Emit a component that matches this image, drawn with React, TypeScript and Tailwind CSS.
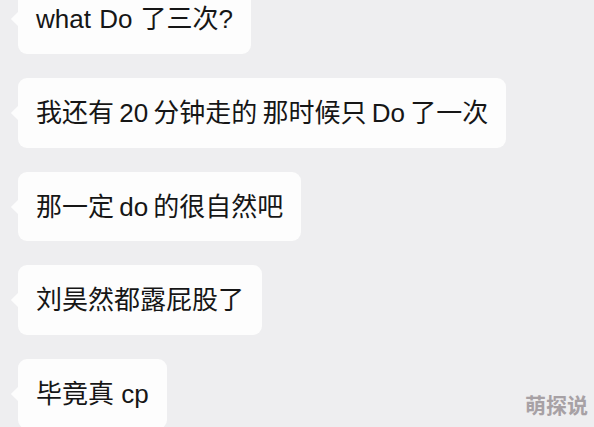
const messages = [
  { text: "what Do 了三次?", h: "h-[70px]", ws: "[word-spacing:1px]" },
  { text: "我还有 20 分钟走的 那时候只 Do 了一次", h: "h-[70px]", ws: "[word-spacing:-2px]" },
  { text: "那一定 do 的很自然吧", h: "h-[69px]", ws: "[word-spacing:-2px]" },
  { text: "刘昊然都露屁股了", h: "h-[70px]", ws: "" },
  { text: "毕竟真 cp", h: "h-[70px]", ws: "" },
];

const Bubble = ({ text, h, ws }: { text: string; h: string; ws: string }) => (
  <div className="relative self-start">
    <div className="absolute left-[-5px] top-1/2 h-[10px] w-[10px] -translate-y-1/2 rotate-45 bg-[#fdfdfd]" />
    <div
      className={`relative flex items-center rounded-[9px] bg-[#fdfdfd] pl-[18px] pr-[18px] text-[26px] leading-none text-[#161616] ${ws} ${h}`}
    >
      {text}
    </div>
  </div>
);

export default function App() {
  return (
    <div
      className="relative h-[427px] w-[594px] overflow-hidden bg-[#eeeef0]"
      style={{ fontFamily: '"Liberation Sans", "Noto Sans CJK SC", sans-serif' }}
    >
      <div className="mt-[-16px] flex flex-col gap-[24px] pl-[18px]">
        {messages.map((m, i) => (
          <Bubble key={i} text={m.text} h={m.h} ws={m.ws} />
        ))}
      </div>
      <div
        className="absolute bottom-[7px] right-[6px] text-[21px] font-bold text-[#a7a1a5]"
        style={{ fontFamily: '"Noto Sans CJK SC", sans-serif' }}
      >
        萌探说
      </div>
    </div>
  );
}
